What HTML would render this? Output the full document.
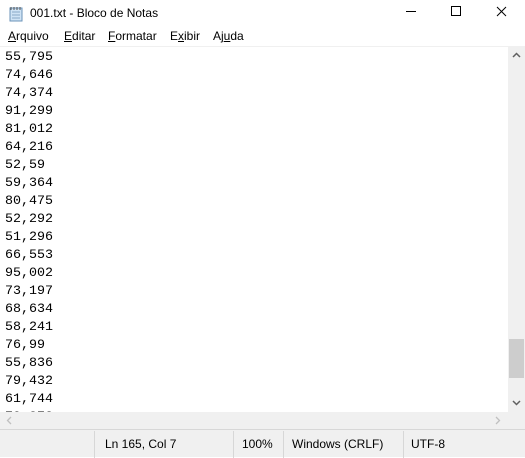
<!DOCTYPE html>
<html><head><style>
*{margin:0;padding:0;box-sizing:border-box}
body{width:525px;height:457px;background:#fff;position:relative;overflow:hidden;font-family:"Liberation Sans",sans-serif;font-size:12px;color:#000}
.abs{position:absolute}
#title{left:0;top:0;width:525px;height:28px;background:#fff}
#menu{left:0;top:28px;height:18px;width:525px;background:#fff}
#menu span{position:absolute;top:1px}
#edit{left:0;top:46px;width:508px;height:366px;background:#fff;border-top:1px solid #f0f0f0;overflow:hidden}
#edit pre{font-family:"Liberation Mono",monospace;font-size:13.33px;line-height:18px;margin-left:5px;margin-top:2px;color:#000}
#vs{left:508px;top:46px;width:17px;height:366px;background:#f0f0f0}
#hs{left:0;top:412px;width:525px;height:17px;background:#f0f0f0}
#status{left:0;top:429px;width:525px;height:28px;background:#f0f0f0;border-top:1px solid #d7d7d7}
.sep{position:absolute;top:1px;width:1px;height:27px;background:#d7d7d7}
#status span{position:absolute;top:7px}
</style></head><body>
<div id="title" class="abs">
<svg class="abs" style="left:9px;top:6px" width="14" height="16"><rect x="1" y="2" width="12" height="13" fill="#cfe3f5" stroke="#6b93b8"/><path d="M3 6h8M3 9h8M3 12h8" stroke="#8aa9c6"/><path d="M2 1v3M5 1v3M8 1v3M11 1v3" stroke="#555"/></svg>
<span class="abs" style="left:30px;top:6px;font-size:12px">001.txt - Bloco de Notas</span>
<svg class="abs" style="left:400px;top:5px" width="125" height="18"><path d="M6 6.5h10" stroke="#000"/><rect x="51.5" y="1.5" width="9" height="9" fill="none" stroke="#000"/><path d="M97 2l9 9M106 2l-9 9" stroke="#000"/></svg>
</div>
<div id="menu" class="abs">
<span style="left:8px"><u>A</u>rquivo</span>
<span style="left:64px"><u>E</u>ditar</span>
<span style="left:108px"><u>F</u>ormatar</span>
<span style="left:170px">E<u>x</u>ibir</span>
<span style="left:213px">Aj<u>u</u>da</span>
</div>
<div id="edit" class="abs"><pre>55,795
74,646
74,374
91,299
81,012
64,216
52,59
59,364
80,475
52,292
51,296
66,553
95,002
73,197
68,634
58,241
76,99
55,836
79,432
61,744
79,873</pre></div>
<div id="vs" class="abs">
<svg class="abs" style="left:4px;top:6px" width="9" height="6"><path d="M1 5l3.5-3.5L8 5" stroke="#606060" stroke-width="1.5" fill="none"/></svg>
<div class="abs" style="left:1px;top:293px;width:15px;height:39px;background:#cdcdcd"></div>
<svg class="abs" style="left:4px;top:354px" width="9" height="6"><path d="M1 1l3.5 3.5L8 1" stroke="#606060" stroke-width="1.5" fill="none"/></svg>
</div>
<div id="hs" class="abs">
<svg class="abs" style="left:6px;top:4px" width="6" height="9"><path d="M5 1L1.5 4.5 5 8" stroke="#c0c0c0" stroke-width="1.3" fill="none"/></svg>
<svg class="abs" style="left:495px;top:4px" width="6" height="9"><path d="M1 1l3.5 3.5L1 8" stroke="#c0c0c0" stroke-width="1.3" fill="none"/></svg>
</div>
<div id="status" class="abs">
<div class="sep" style="left:94px"></div>
<div class="sep" style="left:233px"></div>
<div class="sep" style="left:283px"></div>
<div class="sep" style="left:403px"></div>
<span style="left:105px">Ln 165, Col 7</span>
<span style="left:242px">100%</span>
<span style="left:292px">Windows (CRLF)</span>
<span style="left:411px">UTF-8</span>
</div>
</body></html>
